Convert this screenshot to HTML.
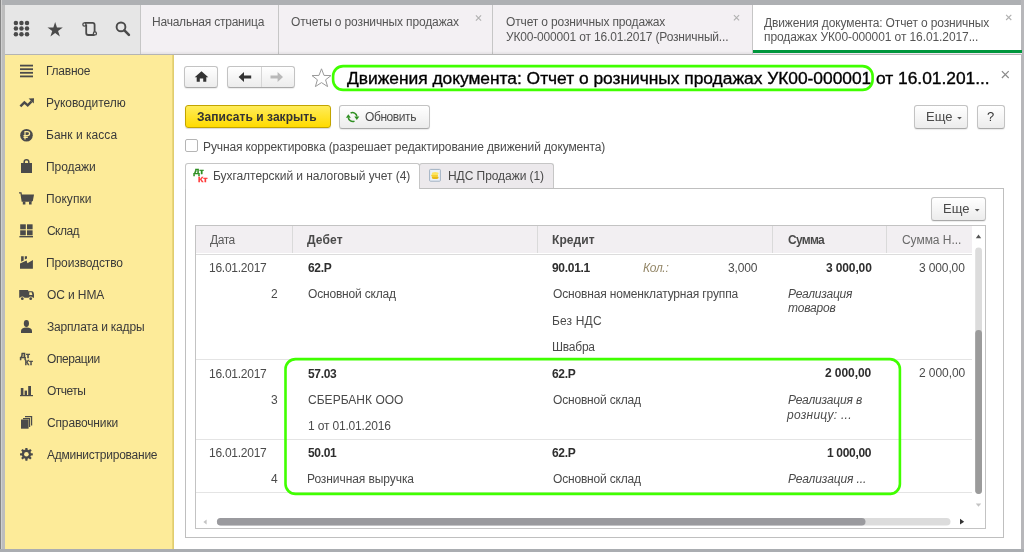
<!DOCTYPE html><html><head><meta charset="utf-8"><style>html,body{margin:0;padding:0;width:1024px;height:552px;overflow:hidden;background:#b9b9bc;}body{position:relative;font-family:"Liberation Sans", sans-serif;} div,svg{will-change:transform;}.btn{position:absolute;box-sizing:border-box;border:1px solid #c3c3c3;border-bottom-color:#a9a9a9;border-radius:3px;background:linear-gradient(#ffffff,#ececec);box-shadow:0 1px 1px rgba(0,0,0,0.08);}</style></head><body>
<div style="position:absolute;left:0px;top:0px;width:1024px;height:4.5px;background:#aeb0b3;"></div>
<div style="position:absolute;left:0px;top:0px;width:1.2px;height:552px;background:#858585;"></div>
<div style="position:absolute;left:1.2px;top:0px;width:1.0000000000000002px;height:552px;background:#cfcfcf;"></div>
<div style="position:absolute;left:2.2px;top:4.5px;width:2.8px;height:547.5px;background:#bdbdbd;"></div>
<div style="position:absolute;left:1021px;top:0px;width:3px;height:552px;background:#b7b7ba;"></div>
<div style="position:absolute;left:0px;top:549px;width:1024px;height:3px;background:#aaadb1;"></div>
<div style="position:absolute;left:5px;top:4.5px;width:135px;height:48.5px;background:#e6e6e6;"></div>
<div style="position:absolute;left:140px;top:4.5px;width:881px;height:48.5px;background:#f3f0f3;"></div>
<div style="position:absolute;left:752px;top:4.5px;width:269px;height:48.5px;background:#ffffff;"></div>
<div style="position:absolute;left:140px;top:4.5px;width:1px;height:48.5px;background:#c6c6c6;"></div>
<div style="position:absolute;left:278px;top:4.5px;width:1px;height:48.5px;background:#c6c6c6;"></div>
<div style="position:absolute;left:492px;top:4.5px;width:1px;height:48.5px;background:#c6c6c6;"></div>
<div style="position:absolute;left:751.5px;top:4.5px;width:1.0px;height:48.5px;background:#c6c6c6;"></div>
<div style="position:absolute;left:141px;top:50.5px;width:611px;height:3.299999999999997px;background:linear-gradient(rgba(0,0,0,0),rgba(0,0,0,0.06));"></div>
<div style="position:absolute;left:5px;top:53.8px;width:1016px;height:1.0px;background:#b4b4b4;"></div>
<div style="position:absolute;left:752.5px;top:50px;width:268.5px;height:3px;background:#00963c;"></div>
<div style="position:absolute;left:752.5px;top:53px;width:268.5px;height:0.7999999999999972px;background:#f0e8f0;"></div>
<div style="position:absolute;left:5px;top:54.8px;width:166.8px;height:494.2px;background:#fdeb99;"></div>
<div style="position:absolute;left:171.8px;top:54.8px;width:2.1999999999999886px;height:494.2px;background:linear-gradient(90deg,#efdc80,#dcc86a);"></div>
<div style="position:absolute;left:174px;top:54.8px;width:847px;height:494.2px;background:#ffffff;"></div>
<div id="txt" style="position:absolute;left:0;top:0;">
<div style="position:absolute;left:152.00px;top:16.3px;font-size:12px;line-height:12px;font-weight:normal;font-style:normal;color:#555;white-space:pre;letter-spacing:-0.224px;">Начальная страница</div>
<div style="position:absolute;left:290.60px;top:16.3px;font-size:12px;line-height:12px;font-weight:normal;font-style:normal;color:#555;white-space:pre;letter-spacing:-0.138px;">Отчеты о розничных продажах</div>
<div style="position:absolute;left:505.90px;top:16.4px;font-size:12px;line-height:12px;font-weight:normal;font-style:normal;color:#555;white-space:pre;letter-spacing:-0.148px;">Отчет о розничных продажах</div>
<div style="position:absolute;left:505.90px;top:30.9px;font-size:12px;line-height:12px;font-weight:normal;font-style:normal;color:#555;white-space:pre;letter-spacing:-0.171px;">УК00-000001 от 16.01.2017 (Розничный...</div>
<div style="position:absolute;left:764.40px;top:16.7px;font-size:12px;line-height:12px;font-weight:normal;font-style:normal;color:#555;white-space:pre;letter-spacing:-0.133px;">Движения документа: Отчет о розничных</div>
<div style="position:absolute;left:763.60px;top:30.799999999999997px;font-size:12px;line-height:12px;font-weight:normal;font-style:normal;color:#555;white-space:pre;letter-spacing:-0.097px;">продажах УК00-000001 от 16.01.2017...</div>
<div style="position:absolute;left:45.80px;top:65.2px;font-size:12px;line-height:12px;font-weight:normal;font-style:normal;color:#3a3a3a;white-space:pre;letter-spacing:-0.25px;">Главное</div>
<div style="position:absolute;left:45.80px;top:97.2px;font-size:12px;line-height:12px;font-weight:normal;font-style:normal;color:#3a3a3a;white-space:pre;letter-spacing:-0.036px;">Руководителю</div>
<div style="position:absolute;left:45.80px;top:129.2px;font-size:12px;line-height:12px;font-weight:normal;font-style:normal;color:#3a3a3a;white-space:pre;letter-spacing:0.036px;">Банк и касса</div>
<div style="position:absolute;left:45.80px;top:161.2px;font-size:12px;line-height:12px;font-weight:normal;font-style:normal;color:#3a3a3a;white-space:pre;letter-spacing:-0.067px;">Продажи</div>
<div style="position:absolute;left:45.80px;top:193.2px;font-size:12px;line-height:12px;font-weight:normal;font-style:normal;color:#3a3a3a;white-space:pre;letter-spacing:0.05px;">Покупки</div>
<div style="position:absolute;left:46.80px;top:225.2px;font-size:12px;line-height:12px;font-weight:normal;font-style:normal;color:#3a3a3a;white-space:pre;letter-spacing:-0.55px;">Склад</div>
<div style="position:absolute;left:45.80px;top:257.2px;font-size:12px;line-height:12px;font-weight:normal;font-style:normal;color:#3a3a3a;white-space:pre;letter-spacing:-0.109px;">Производство</div>
<div style="position:absolute;left:46.80px;top:289.2px;font-size:12px;line-height:12px;font-weight:normal;font-style:normal;color:#3a3a3a;white-space:pre;letter-spacing:-0.1px;">ОС и НМА</div>
<div style="position:absolute;left:46.80px;top:321.2px;font-size:12px;line-height:12px;font-weight:normal;font-style:normal;color:#3a3a3a;white-space:pre;letter-spacing:-0.193px;">Зарплата и кадры</div>
<div style="position:absolute;left:46.80px;top:353.2px;font-size:12px;line-height:12px;font-weight:normal;font-style:normal;color:#3a3a3a;white-space:pre;letter-spacing:-0.429px;">Операции</div>
<div style="position:absolute;left:46.80px;top:385.2px;font-size:12px;line-height:12px;font-weight:normal;font-style:normal;color:#3a3a3a;white-space:pre;letter-spacing:-0.54px;">Отчеты</div>
<div style="position:absolute;left:46.80px;top:417.2px;font-size:12px;line-height:12px;font-weight:normal;font-style:normal;color:#3a3a3a;white-space:pre;letter-spacing:-0.15px;">Справочники</div>
<div style="position:absolute;left:46.80px;top:449.2px;font-size:12px;line-height:12px;font-weight:normal;font-style:normal;color:#3a3a3a;white-space:pre;letter-spacing:-0.244px;">Администрирование</div>
<div style="position:absolute;left:347.00px;top:69.9px;font-size:17.4px;line-height:17.4px;font-weight:normal;font-style:normal;color:#000;white-space:pre;letter-spacing:-0.022px;-webkit-text-stroke:0.35px #000;">Движения документа: Отчет о розничных продажах УК00-000001 от 16.01.201...</div>
</div>
<svg style="position:absolute;left:0px;top:0px;overflow:visible" width="140" height="54" viewBox="0 0 140 54"><circle cx="15.90" cy="23.00" r="2.25" fill="#4a4a4a"/><circle cx="15.90" cy="28.60" r="2.25" fill="#4a4a4a"/><circle cx="15.90" cy="34.20" r="2.25" fill="#4a4a4a"/><circle cx="21.45" cy="23.00" r="2.25" fill="#4a4a4a"/><circle cx="21.45" cy="28.60" r="2.25" fill="#4a4a4a"/><circle cx="21.45" cy="34.20" r="2.25" fill="#4a4a4a"/><circle cx="27.00" cy="23.00" r="2.25" fill="#4a4a4a"/><circle cx="27.00" cy="28.60" r="2.25" fill="#4a4a4a"/><circle cx="27.00" cy="34.20" r="2.25" fill="#4a4a4a"/><polygon fill="#4a4a4a" points="55.15,21.90 56.96,27.46 62.80,27.46 58.07,30.89 59.88,36.44 55.15,33.01 50.42,36.44 52.23,30.89 47.50,27.46 53.34,27.46"/><path d="M84.4,22.9 H92.6 Q94.6,22.9 94.6,24.9 V32.2" fill="none" stroke="#4a4a4a" stroke-width="1.8"/><path d="M86.2,24.4 V33 Q86.2,35 88.2,35 H94.6" fill="none" stroke="#4a4a4a" stroke-width="1.8"/><circle cx="84.4" cy="24.5" r="1.55" fill="#e6e6e6" stroke="#4a4a4a" stroke-width="1.3"/><circle cx="94.9" cy="33.4" r="1.55" fill="#e6e6e6" stroke="#4a4a4a" stroke-width="1.3"/><circle cx="121" cy="26.9" r="4.4" fill="none" stroke="#4a4a4a" stroke-width="1.9"/><line x1="124.4" y1="30.3" x2="128.9" y2="34.8" stroke="#4a4a4a" stroke-width="2.6" stroke-linecap="round"/></svg>
<svg style="position:absolute;left:0px;top:0px;overflow:visible" width="1024" height="100" viewBox="0 0 1024 100"><path d="M475.9,15.4 L481.1,20.6 M481.1,15.4 L475.9,20.6" stroke="#b0b0b0" stroke-width="1.1"/><path d="M733.9,15.200000000000001 L739.1,20.400000000000002 M739.1,15.200000000000001 L733.9,20.400000000000002" stroke="#b0b0b0" stroke-width="1.1"/><path d="M1006.1,14.799999999999999 L1011.3000000000001,20.0 M1011.3000000000001,14.799999999999999 L1006.1,20.0" stroke="#b0b0b0" stroke-width="1.1"/><path d="M1001.9,71.19999999999999 L1008.6999999999999,78.0 M1008.6999999999999,71.19999999999999 L1001.9,78.0" stroke="#8a8a8a" stroke-width="1.2"/></svg>
<svg style="position:absolute;left:0px;top:0px;overflow:visible" width="174" height="552" viewBox="0 0 174 552"><rect x="20" y="64.69999999999999" width="13" height="1.8" fill="#4a4a4a"/><rect x="20" y="68.3" width="13" height="1.8" fill="#4a4a4a"/><rect x="20" y="71.89999999999999" width="13" height="1.8" fill="#4a4a4a"/><rect x="20" y="75.5" width="13" height="1.8" fill="#4a4a4a"/><path d="M20.4,106.4 L24.4,102.3 L27.7,105.3 L31.6,101.3" fill="none" stroke="#4a4a4a" stroke-width="2.4" stroke-linejoin="miter"/><polygon points="28.6,98.5 34,98.3 33.8,103.6" fill="#4a4a4a"/><circle cx="26.5" cy="135.2" r="6.3" fill="#4a4a4a"/><path d="M25,139.5 V131.6 H27.4 Q29.6,131.6 29.6,133.6 Q29.6,135.6 27.4,135.6 H23.5 M23.5,137.4 H27.8" fill="none" stroke="#fdea97" stroke-width="1.2"/><rect x="21" y="163" width="11" height="10" fill="#4a4a4a"/><path d="M24.2,165 V162 Q24.2,159.8 26.5,159.8 Q28.8,159.8 28.8,162 V165" fill="none" stroke="#4a4a4a" stroke-width="1.5"/><path d="M19,192.8 H21 L22.2,201 H32.2" fill="none" stroke="#4a4a4a" stroke-width="1.3"/><polygon points="21.3,194.5 34,194.5 32.8,201 22.2,201" fill="#4a4a4a"/><rect x="22.8" y="201.5" width="2.6" height="3" fill="#4a4a4a"/><rect x="29" y="201.5" width="2.6" height="3" fill="#4a4a4a"/><rect x="20.2" y="224.3" width="5.6" height="5" fill="#4a4a4a"/><rect x="27" y="224.3" width="5.6" height="5" fill="#4a4a4a"/><rect x="20.2" y="230.3" width="5.6" height="5" fill="#4a4a4a"/><rect x="27" y="230.3" width="5.6" height="5" fill="#4a4a4a"/><rect x="19.4" y="236" width="13.6" height="1.4" fill="#4a4a4a"/><polygon points="21.1,256.2 23.7,256.2 23.7,260.6 21.1,261.8" fill="#4a4a4a"/><polygon points="24.8,256.2 27,256.2 27,258.6 24.8,259.6" fill="#4a4a4a"/><polygon points="20,268.8 20,263.6 26.6,260.6 27.4,263.2 32.9,259.9 32.9,268.8" fill="#4a4a4a"/><path d="M19.2,290 H28.2 V291.2 H31.8 Q33.1,291.2 33.6,292.6 L34,294.4 V297.8 H19.2 Z" fill="#4a4a4a"/><path d="M29.3,292.3 H31.6 L32.4,294.9 H29.3 Z" fill="#fdeb99"/><circle cx="22.3" cy="298.7" r="2.3" fill="#fdeb99"/><circle cx="30.7" cy="298.7" r="2.3" fill="#fdeb99"/><circle cx="22.3" cy="298.7" r="1.4" fill="#4a4a4a"/><circle cx="30.7" cy="298.7" r="1.4" fill="#4a4a4a"/><ellipse cx="26.4" cy="323.5" rx="2.6" ry="3.4" fill="#4a4a4a"/><path d="M21,333 V331 Q21,327.6 26.5,327.4 Q32,327.6 32,331 V333 Z" fill="#4a4a4a"/><text x="20" y="357.5" font-family="Liberation Sans" font-weight="bold" font-size="7.4" fill="#4a4a4a" stroke="#4a4a4a" stroke-width="0.4" textLength="10" lengthAdjust="spacingAndGlyphs">Дт</text><text x="24.8" y="364.7" font-family="Liberation Sans" font-weight="bold" font-size="7.4" fill="#4a4a4a" stroke="#4a4a4a" stroke-width="0.4" textLength="8" lengthAdjust="spacingAndGlyphs">Кт</text><rect x="20.8" y="388" width="2.6" height="7.3" fill="#4a4a4a"/><rect x="24.6" y="390.6" width="2.4" height="4.7" fill="#4a4a4a"/><rect x="28.2" y="386" width="2.8" height="9.3" fill="#4a4a4a"/><rect x="20" y="395" width="13" height="1.2" fill="#4a4a4a"/><path d="M25,416.6 H31.6 V425.5 M23,418.6 H29.6 V427" fill="none" stroke="#4a4a4a" stroke-width="1.2"/><rect x="21" y="419.5" width="7.6" height="9.2" fill="#4a4a4a"/><circle cx="26.4" cy="454.3" r="4.7" fill="#4a4a4a"/><rect x="25.25" y="447.9" width="2.3" height="3" rx="0.4" fill="#4a4a4a" transform="rotate(0 26.4 454.3)"/><rect x="25.25" y="447.9" width="2.3" height="3" rx="0.4" fill="#4a4a4a" transform="rotate(45 26.4 454.3)"/><rect x="25.25" y="447.9" width="2.3" height="3" rx="0.4" fill="#4a4a4a" transform="rotate(90 26.4 454.3)"/><rect x="25.25" y="447.9" width="2.3" height="3" rx="0.4" fill="#4a4a4a" transform="rotate(135 26.4 454.3)"/><rect x="25.25" y="447.9" width="2.3" height="3" rx="0.4" fill="#4a4a4a" transform="rotate(180 26.4 454.3)"/><rect x="25.25" y="447.9" width="2.3" height="3" rx="0.4" fill="#4a4a4a" transform="rotate(225 26.4 454.3)"/><rect x="25.25" y="447.9" width="2.3" height="3" rx="0.4" fill="#4a4a4a" transform="rotate(270 26.4 454.3)"/><rect x="25.25" y="447.9" width="2.3" height="3" rx="0.4" fill="#4a4a4a" transform="rotate(315 26.4 454.3)"/><circle cx="26.4" cy="454.3" r="2.3" fill="#fdeb99"/></svg>
<div class="btn" style="left:184px;top:66px;width:34px;height:22px;"></div>
<div class="btn" style="left:227px;top:66px;width:68px;height:22px;"></div>
<div style="position:absolute;left:261px;top:67px;width:1px;height:20px;background:#d6d6d6;"></div>
<svg style="position:absolute;left:0px;top:0px;overflow:visible" width="1024" height="100" viewBox="0 0 1024 100"><path d="M201.5,71.2 L208.3,77.2 H206.3 V81.8 H203.2 V78.6 H199.8 V81.8 H196.7 V77.2 H194.7 Z" fill="#333"/><path d="M238.6,77 L244,72 V75.4 H251.2 V78.6 H244 V82 Z" fill="#333"/><path d="M283,77 L277.6,72 V75.6 H270.5 V78.4 H277.6 V82 Z" fill="#b9b9b9"/><polygon fill="none" stroke="#999" stroke-width="1" points="321.5,68.8 324,75.4 331,75.6 325.6,79.8 327.6,86.6 321.5,82.6 315.4,86.6 317.4,79.8 312,75.6 319,75.4"/><rect x="333.1" y="66.1" width="539.5" height="23.8" rx="10" ry="10" fill="none" stroke="#40ff00" stroke-width="2.6"/></svg>
<div style="position:absolute;left:184.7px;top:105.3px;width:145.8px;height:23.2px;box-sizing:border-box;border:1px solid #c2a400;border-radius:3px;background:linear-gradient(#ffec5a,#ffdb00);box-shadow:0 1px 1px rgba(0,0,0,0.15);"></div>
<div style="position:absolute;left:197.30px;top:111.3px;font-size:12px;line-height:12px;font-weight:bold;font-style:normal;color:#333;white-space:pre;letter-spacing:0.041px;">Записать и закрыть</div>
<div class="btn" style="left:339px;top:105px;width:91px;height:23.5px;"></div>
<div style="position:absolute;left:365.30px;top:111.3px;font-size:12px;line-height:12px;font-weight:normal;font-style:normal;color:#4a4a4a;white-space:pre;letter-spacing:-0.414px;">Обновить</div>
<svg style="position:absolute;left:0px;top:0px;overflow:visible" width="1024" height="140" viewBox="0 0 1024 140"><path d="M350.6,113.0 A4.4,4.4 0 0 1 356.9,116.4" fill="none" stroke="#2f8f22" stroke-width="1.5"/><polygon points="354.3,116.5 359.3,116.5 356.8,119.9" fill="#2f8f22"/><path d="M354.5,121.1 A4.4,4.4 0 0 1 348.3,117.6" fill="none" stroke="#2f8f22" stroke-width="1.5"/><polygon points="345.9,117.8 350.8,117.8 348.3,114.2" fill="#2f8f22"/></svg>
<div class="btn" style="left:914px;top:105px;width:54px;height:23.5px;"></div>
<div style="position:absolute;left:925.70px;top:110.3px;font-size:13px;line-height:13px;font-weight:normal;font-style:normal;color:#4a4a4a;white-space:pre;">Еще</div>
<div class="btn" style="left:976.5px;top:105px;width:27.5px;height:23.5px;"></div>
<div style="position:absolute;left:987.00px;top:110.3px;font-size:13px;line-height:13px;font-weight:normal;font-style:normal;color:#333;white-space:pre;">?</div>
<svg style="position:absolute;left:0px;top:0px;overflow:visible" width="1024" height="230" viewBox="0 0 1024 230"><polygon points="957.2,117 961.8,117 959.5,119.4" fill="#555"/></svg>
<div style="position:absolute;left:185.3px;top:138.8px;width:13.4px;height:13px;box-sizing:border-box;border:1px solid #b5b5b5;border-radius:2px;background:#fff;"></div>
<div style="position:absolute;left:203.20px;top:141px;font-size:12px;line-height:12px;font-weight:normal;font-style:normal;color:#4a4a4a;white-space:pre;letter-spacing:-0.123px;">Ручная корректировка (разрешает редактирование движений документа)</div>
<div style="position:absolute;left:419px;top:163px;width:134.6px;height:25.5px;box-sizing:border-box;border:1px solid #c6c6c6;border-bottom:none;border-radius:3px 3px 0 0;background:#ece9ec;"></div>
<div style="position:absolute;left:184.6px;top:188px;width:819.4px;height:350px;box-sizing:border-box;border:1px solid #bfbfbf;"></div>
<div style="position:absolute;left:184.6px;top:162.7px;width:234.9px;height:26.3px;box-sizing:border-box;border:1px solid #c6c6c6;border-bottom:none;border-radius:3px 3px 0 0;background:#fff;"></div>
<div style="position:absolute;left:213.30px;top:170px;font-size:12px;line-height:12px;font-weight:normal;font-style:normal;color:#4a4a4a;white-space:pre;letter-spacing:-0.055px;">Бухгалтерский и налоговый учет (4)</div>
<div style="position:absolute;left:447.90px;top:169.7px;font-size:12px;line-height:12px;font-weight:normal;font-style:normal;color:#4a4a4a;white-space:pre;letter-spacing:-0.057px;">НДС Продажи (1)</div>
<svg style="position:absolute;left:0px;top:0px;overflow:visible" width="1024" height="200" viewBox="0 0 1024 200"><text x="193.4" y="173.6" font-family="Liberation Sans" font-weight="bold" font-size="7.4" fill="#2f8f22" stroke="#2f8f22" stroke-width="0.35" textLength="10.4" lengthAdjust="spacingAndGlyphs">Дт</text><text x="198" y="181.8" font-family="Liberation Sans" font-weight="bold" font-size="7.6" fill="#ff3838" stroke="#ff3838" stroke-width="0.3" textLength="9.6" lengthAdjust="spacingAndGlyphs">Кт</text><rect x="429.6" y="169.4" width="10.8" height="11.8" rx="0.8" fill="#eaf0f8" stroke="#9aabbd" stroke-width="0.9"/><ellipse cx="435.2" cy="177.4" rx="3.4" ry="1.5" fill="#e8b818"/><ellipse cx="434.6" cy="175.5" rx="3.4" ry="1.5" fill="#f6d030"/><ellipse cx="435.2" cy="173.6" rx="3.4" ry="1.5" fill="#fde460"/></svg>
<div class="btn" style="left:931px;top:197px;width:54.5px;height:24px;"></div>
<div style="position:absolute;left:942.50px;top:202.3px;font-size:13px;line-height:13px;font-weight:normal;font-style:normal;color:#4a4a4a;white-space:pre;">Еще</div>
<svg style="position:absolute;left:0px;top:0px;overflow:visible" width="1024" height="230" viewBox="0 0 1024 230"><polygon points="974.8,209 979.6,209 977.2,211.4" fill="#555"/></svg>
<div style="position:absolute;left:195px;top:225.3px;width:790.8px;height:303.5px;box-sizing:border-box;border:1px solid #c3c3c3;background:#fff;"></div>
<div style="position:absolute;left:196px;top:226.3px;width:776px;height:27.19999999999999px;background:#f2eff2;"></div>
<div style="position:absolute;left:196px;top:253.5px;width:776px;height:1.0px;background:#dcdcdc;"></div>
<div style="position:absolute;left:292px;top:226.3px;width:1px;height:27.19999999999999px;background:#dadada;"></div>
<div style="position:absolute;left:537px;top:226.3px;width:1px;height:27.19999999999999px;background:#dadada;"></div>
<div style="position:absolute;left:772px;top:226.3px;width:1px;height:27.19999999999999px;background:#dadada;"></div>
<div style="position:absolute;left:886.3px;top:226.3px;width:1.0px;height:27.19999999999999px;background:#dadada;"></div>
<div style="position:absolute;left:209.70px;top:234px;font-size:12px;line-height:12px;font-weight:normal;font-style:normal;color:#5a5a5a;white-space:pre;letter-spacing:-0.433px;">Дата</div>
<div style="position:absolute;left:307.40px;top:234px;font-size:12px;line-height:12px;font-weight:bold;font-style:normal;color:#4a4a4a;white-space:pre;letter-spacing:0.125px;">Дебет</div>
<div style="position:absolute;left:552.20px;top:234px;font-size:12px;line-height:12px;font-weight:bold;font-style:normal;color:#4a4a4a;white-space:pre;letter-spacing:0.08px;">Кредит</div>
<div style="position:absolute;left:788.10px;top:234px;font-size:12px;line-height:12px;font-weight:bold;font-style:normal;color:#4a4a4a;white-space:pre;letter-spacing:-0.725px;">Сумма</div>
<div style="position:absolute;left:901.80px;top:234px;font-size:12px;line-height:12px;font-weight:normal;font-style:normal;color:#6a6a6a;white-space:pre;letter-spacing:-0.044px;">Сумма Н...</div>
<div style="position:absolute;left:196px;top:359.3px;width:776px;height:1.0px;background:#e4e4e4;"></div>
<div style="position:absolute;left:196px;top:438.6px;width:776px;height:1.0px;background:#e4e4e4;"></div>
<div style="position:absolute;left:196px;top:491.6px;width:776px;height:1.0px;background:#e4e4e4;"></div>
<div style="position:absolute;left:209.40px;top:262px;font-size:12px;line-height:12px;font-weight:normal;font-style:normal;color:#4a4a4a;white-space:pre;letter-spacing:-0.256px;">16.01.2017</div>
<div style="position:absolute;left:307.50px;top:262px;font-size:12px;line-height:12px;font-weight:bold;font-style:normal;color:#2e2e2e;white-space:pre;letter-spacing:-0.3px;">62.Р</div>
<div style="position:absolute;left:552.20px;top:262px;font-size:12px;line-height:12px;font-weight:bold;font-style:normal;color:#2e2e2e;white-space:pre;letter-spacing:-0.3px;">90.01.1</div>
<div style="position:absolute;left:643.10px;top:262px;font-size:12px;line-height:12px;font-weight:normal;font-style:italic;color:#958869;white-space:pre;letter-spacing:-0.3px;">Кол.:</div>
<div style="position:absolute;left:727.50px;top:262px;font-size:12px;line-height:12px;font-weight:normal;font-style:normal;color:#4a4a4a;white-space:pre;letter-spacing:-0.175px;">3,000</div>
<div style="position:absolute;left:825.80px;top:262px;font-size:12px;line-height:12px;font-weight:bold;font-style:normal;color:#2e2e2e;white-space:pre;letter-spacing:-0.129px;">3 000,00</div>
<div style="position:absolute;left:918.70px;top:262px;font-size:12px;line-height:12px;font-weight:normal;font-style:normal;color:#4a4a4a;white-space:pre;letter-spacing:-0.129px;">3 000,00</div>
<div style="position:absolute;left:270.90px;top:288.4px;font-size:12px;line-height:12px;font-weight:normal;font-style:normal;color:#4a4a4a;white-space:pre;letter-spacing:0.4px;">2</div>
<div style="position:absolute;left:308.00px;top:288.4px;font-size:12px;line-height:12px;font-weight:normal;font-style:normal;color:#4a4a4a;white-space:pre;letter-spacing:-0.185px;">Основной склад</div>
<div style="position:absolute;left:552.50px;top:288.4px;font-size:12px;line-height:12px;font-weight:normal;font-style:normal;color:#4a4a4a;white-space:pre;letter-spacing:-0.155px;">Основная номенклатурная группа</div>
<div style="position:absolute;left:788.30px;top:288.2px;font-size:12px;line-height:12px;font-weight:normal;font-style:italic;color:#4a4a4a;white-space:pre;letter-spacing:-0.222px;">Реализация</div>
<div style="position:absolute;left:788.30px;top:302.4px;font-size:12px;line-height:12px;font-weight:normal;font-style:italic;color:#4a4a4a;white-space:pre;letter-spacing:-0.183px;">товаров</div>
<div style="position:absolute;left:551.50px;top:314.8px;font-size:12px;line-height:12px;font-weight:normal;font-style:normal;color:#4a4a4a;white-space:pre;letter-spacing:0.167px;">Без НДС</div>
<div style="position:absolute;left:551.50px;top:341.1px;font-size:12px;line-height:12px;font-weight:normal;font-style:normal;color:#4a4a4a;white-space:pre;letter-spacing:-0.22px;">Швабра</div>
<div style="position:absolute;left:209.40px;top:367.6px;font-size:12px;line-height:12px;font-weight:normal;font-style:normal;color:#4a4a4a;white-space:pre;letter-spacing:-0.256px;">16.01.2017</div>
<div style="position:absolute;left:307.70px;top:367.6px;font-size:12px;line-height:12px;font-weight:bold;font-style:normal;color:#2e2e2e;white-space:pre;letter-spacing:-0.35px;">57.03</div>
<div style="position:absolute;left:552.20px;top:367.6px;font-size:12px;line-height:12px;font-weight:bold;font-style:normal;color:#2e2e2e;white-space:pre;letter-spacing:-0.3px;">62.Р</div>
<div style="position:absolute;left:825.20px;top:367.4px;font-size:12px;line-height:12px;font-weight:bold;font-style:normal;color:#2e2e2e;white-space:pre;letter-spacing:-0.071px;">2 000,00</div>
<div style="position:absolute;left:918.50px;top:367.4px;font-size:12px;line-height:12px;font-weight:normal;font-style:normal;color:#4a4a4a;white-space:pre;letter-spacing:-0.071px;">2 000,00</div>
<div style="position:absolute;left:270.90px;top:394.1px;font-size:12px;line-height:12px;font-weight:normal;font-style:normal;color:#4a4a4a;white-space:pre;letter-spacing:0.4px;">3</div>
<div style="position:absolute;left:308.20px;top:394px;font-size:12px;line-height:12px;font-weight:normal;font-style:normal;color:#4a4a4a;white-space:pre;letter-spacing:0.027px;">СБЕРБАНК ООО</div>
<div style="position:absolute;left:552.50px;top:394.1px;font-size:12px;line-height:12px;font-weight:normal;font-style:normal;color:#4a4a4a;white-space:pre;letter-spacing:-0.185px;">Основной склад</div>
<div style="position:absolute;left:788.20px;top:394.1px;font-size:12px;line-height:12px;font-weight:normal;font-style:italic;color:#4a4a4a;white-space:pre;letter-spacing:-0.164px;">Реализация в</div>
<div style="position:absolute;left:787.40px;top:408.8px;font-size:12px;line-height:12px;font-weight:normal;font-style:italic;color:#4a4a4a;white-space:pre;letter-spacing:0.25px;">розницу: ...</div>
<div style="position:absolute;left:307.50px;top:420.4px;font-size:12px;line-height:12px;font-weight:normal;font-style:normal;color:#4a4a4a;white-space:pre;letter-spacing:-0.171px;">1 от 01.01.2016</div>
<div style="position:absolute;left:209.40px;top:446.5px;font-size:12px;line-height:12px;font-weight:normal;font-style:normal;color:#4a4a4a;white-space:pre;letter-spacing:-0.256px;">16.01.2017</div>
<div style="position:absolute;left:307.70px;top:446.5px;font-size:12px;line-height:12px;font-weight:bold;font-style:normal;color:#2e2e2e;white-space:pre;letter-spacing:-0.35px;">50.01</div>
<div style="position:absolute;left:552.20px;top:446.5px;font-size:12px;line-height:12px;font-weight:bold;font-style:normal;color:#2e2e2e;white-space:pre;letter-spacing:-0.3px;">62.Р</div>
<div style="position:absolute;left:826.70px;top:446.6px;font-size:12px;line-height:12px;font-weight:bold;font-style:normal;color:#2e2e2e;white-space:pre;letter-spacing:-0.329px;">1 000,00</div>
<div style="position:absolute;left:270.90px;top:473px;font-size:12px;line-height:12px;font-weight:normal;font-style:normal;color:#4a4a4a;white-space:pre;letter-spacing:-0.6px;">4</div>
<div style="position:absolute;left:307.20px;top:473px;font-size:12px;line-height:12px;font-weight:normal;font-style:normal;color:#4a4a4a;white-space:pre;letter-spacing:-0.075px;">Розничная выручка</div>
<div style="position:absolute;left:552.50px;top:473px;font-size:12px;line-height:12px;font-weight:normal;font-style:normal;color:#4a4a4a;white-space:pre;letter-spacing:-0.185px;">Основной склад</div>
<div style="position:absolute;left:788.20px;top:473.4px;font-size:12px;line-height:12px;font-weight:normal;font-style:italic;color:#4a4a4a;white-space:pre;letter-spacing:-0.108px;">Реализация ...</div>
<svg style="position:absolute;left:0px;top:0px;overflow:visible" width="1024" height="552" viewBox="0 0 1024 552"><polygon points="975.8,238.2 981.2,238.2 978.5,234.4" fill="#555"/><rect x="975.2" y="247.4" width="6.8" height="246.6" rx="3.4" fill="#dcdcdc"/><rect x="975.2" y="330" width="6.8" height="164" rx="3.4" fill="#9b9b9b"/><polygon points="975.8,503.6 981.2,503.6 978.5,506.8" fill="#c3c3c3"/><polygon points="206.6,519.4 206.6,524.6 203.4,522" fill="#c3c3c3"/><rect x="216.9" y="518" width="733.6" height="7.6" rx="3.8" fill="#dcdcdc"/><rect x="216.9" y="518" width="648.6" height="7.6" rx="3.8" fill="#9a9a9e"/><polygon points="960,518.8 960,524.6 964.2,521.7" fill="#333"/><rect x="285.5" y="359.1" width="614.4" height="134.8" rx="10" ry="10" fill="none" stroke="#40ff00" stroke-width="2.6"/></svg>
</body></html>
